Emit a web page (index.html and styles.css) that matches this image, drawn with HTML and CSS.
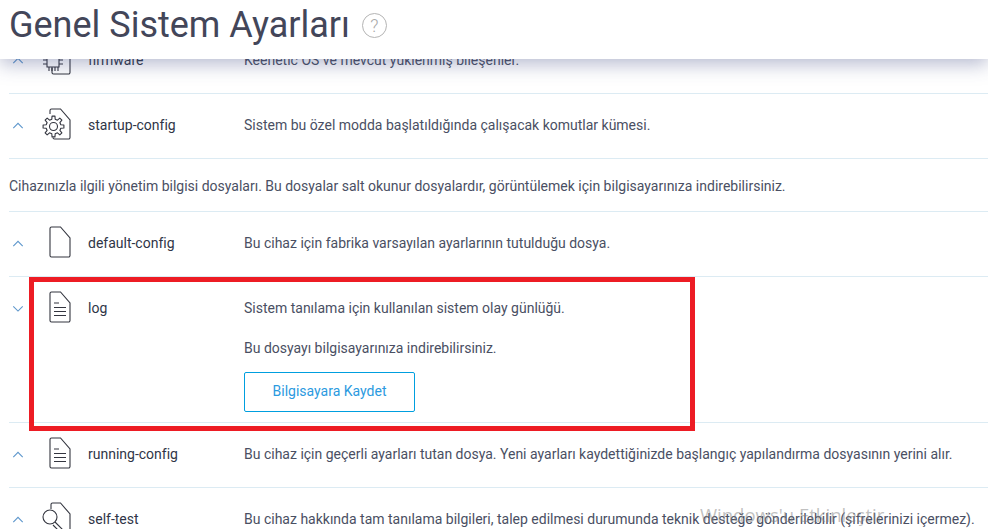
FILE: index.html
```html
<!DOCTYPE html>
<html lang="tr">
<head>
  <meta charset="UTF-8" />
  <title>Genel Sistem Ayarları</title>
  <link rel="stylesheet" href="styles.css">
</head>
<body>

<div class="page">
  <div class="page-header">
    <h1 class="page-title">Genel Sistem Ayarları</h1>
    <span class="help-badge">?</span>
  </div>

  <div class="file-list">
    <div class="file-row">
      <svg class="chevron" viewBox="0 0 14 8"><path d="M1.500 7 7 1.500 12.500 7"/></svg>
      <svg class="file-icon" viewBox="0 0 30 34">
        <path d="M7 26V30.500A1.500 1.500 0 0 0 8.500 32h15a1.500 1.500 0 0 0 1.500-1.500V13L15.500 2H6.500A1.500 1.500 0 0 0 5 3.500V8"/>
        <path d="M2 6h12v19H2zM-2 14h4M-2 18h4M-2 22h4M14 14h4M14 18h4M14 22h4M4 25v4M7 25v4M10 25v4M13 25v4"/>
      </svg>
      <div class="file-name">firmware</div>
      <div class="file-desc">Keenetic OS ve mevcut yüklenmiş bileşenler.</div>
    </div>

    <div class="file-row">
      <svg class="chevron" viewBox="0 0 14 8"><path d="M1.500 7 7 1.500 12.500 7"/></svg>
      <svg class="file-icon" viewBox="0 0 30 34">
        <path d="M5 7V3.500A1.500 1.500 0 0 1 6.500 2H15.500L25 13V30.500A1.500 1.500 0 0 1 23.500 32H9.500A1.500 1.500 0 0 1 8 30.500"/>
        <g transform="translate(8.500 19.500)">
          <path class="gear" d="M-1.690-7.310-1.460-10.400 1.460-10.400 1.690-7.310 3.970-6.360 6.320-8.390 8.390-6.320 6.360-3.970 7.310-1.690 10.400-1.460 10.400 1.460 7.310 1.690 6.360 3.970 8.390 6.320 6.320 8.390 3.970 6.360 1.690 7.310 1.460 10.400-1.460 10.400-1.690 7.310-3.970 6.360-6.320 8.390-8.390 6.320-6.360 3.970-7.310 1.690-10.400 1.460-10.400-1.460-7.310-1.690-6.360-3.970-8.390-6.320-6.320-8.390-3.970-6.360z"/>
          <circle r="4"/>
        </g>
      </svg>
      <div class="file-name">startup-config</div>
      <div class="file-desc">Sistem bu özel modda başlatıldığında çalışacak komutlar kümesi.</div>
    </div>

    <p class="list-note">Cihazınızla ilgili yönetim bilgisi dosyaları. Bu dosyalar salt okunur dosyalardır, görüntülemek için bilgisayarınıza indirebilirsiniz.</p>

    <div class="file-row">
      <svg class="chevron" viewBox="0 0 14 8"><path d="M1.500 7 7 1.500 12.500 7"/></svg>
      <svg class="file-icon" viewBox="0 0 30 34">
        <path d="M5 3.500A1.500 1.500 0 0 1 6.500 2H15.500L25 13V30.500A1.500 1.500 0 0 1 23.500 32h-17A1.500 1.500 0 0 1 5 30.500z"/>
      </svg>
      <div class="file-name">default-config</div>
      <div class="file-desc">Bu cihaz için fabrika varsayılan ayarlarının tutulduğu dosya.</div>
    </div>

    <div class="file-row is-open">
      <svg class="chevron" viewBox="0 0 14 8"><path d="M1.500 1.500 7 7l5.500-5.500"/></svg>
      <svg class="file-icon" viewBox="0 0 30 34">
        <path d="M5 3.500A1.500 1.500 0 0 1 6.500 2H15.500L25 13V30.500A1.500 1.500 0 0 1 23.500 32h-17A1.500 1.500 0 0 1 5 30.500z"/>
        <path d="M9 13h5M9 17.500h12M9 21.500h12M9 25.500h12"/>
      </svg>
      <div class="file-name">log</div>
      <div class="file-desc">
        Sistem tanılama için kullanılan sistem olay günlüğü.
        <p class="file-hint">Bu dosyayı bilgisayarınıza indirebilirsiniz.</p>
        <button class="save-button" type="button">Bilgisayara Kaydet</button>
      </div>
      <div class="highlight-box"></div>
    </div>

    <div class="file-row">
      <svg class="chevron" viewBox="0 0 14 8"><path d="M1.500 7 7 1.500 12.500 7"/></svg>
      <svg class="file-icon" viewBox="0 0 30 34">
        <path d="M5 3.500A1.500 1.500 0 0 1 6.500 2H15.500L25 13V30.500A1.500 1.500 0 0 1 23.500 32h-17A1.500 1.500 0 0 1 5 30.500z"/>
        <path d="M9 13h5M9 17.500h12M9 21.500h12M9 25.500h12"/>
      </svg>
      <div class="file-name">running-config</div>
      <div class="file-desc">Bu cihaz için geçerli ayarları tutan dosya. Yeni ayarları kaydettiğinizde başlangıç yapılandırma dosyasının yerini alır.</div>
    </div>

    <div class="file-row">
      <svg class="chevron" viewBox="0 0 14 8"><path d="M1.500 7 7 1.500 12.500 7"/></svg>
      <svg class="file-icon" viewBox="0 0 30 34">
        <path d="M6 8V3.500A1.500 1.500 0 0 1 7.500 2H15.500L25 13V30.500A1.500 1.500 0 0 1 23.500 32H20"/>
        <circle cx="5" cy="16" r="7"/>
        <path d="M10 21 19 30l-2.500 2.500L8 24"/>
      </svg>
      <div class="file-name">self-test</div>
      <div class="file-desc">Bu cihaz hakkında tam tanılama bilgileri, talep edilmesi durumunda teknik desteğe gönderilebilir (şifrelerinizi içermez).</div>
    </div>
  </div>

  <div class="watermark">Windows'u Etkinleştir</div>
</div>

</body>
</html>
```

FILE: styles.css
```css
html, body {
  margin: 0;
  height: 100%;
  overflow: hidden;
  background: #fff;
}

body {
  font-family: Roboto, sans-serif;
  font-size: 14px;
  color: #4a4f63;
}

.page {
  position: relative;
  height: 529px;
  overflow: hidden;
}

.page-header {
  position: absolute;
  top: 0;
  left: 0;
  right: 0;
  z-index: 2;
  height: 59px;
  display: flex;
  align-items: center;
  gap: 12px;
  padding: 0 0 9px 9px;
  box-sizing: border-box;
  background: #fff;
  box-shadow: 0 5px 18px rgba(60, 70, 130, 0.38);
}

.page-title {
  margin: 0;
  font-size: 36px;
  font-weight: 400;
  line-height: 50px;
  color: #434659;
}

.help-badge {
  width: 25px;
  height: 25px;
  box-sizing: border-box;
  border: 1px solid #b4b4b4;
  border-radius: 50%;
  font-size: 18px;
  font-weight: 300;
  line-height: 23px;
  text-align: center;
  color: #a8a8a8;
}

.file-list {
  margin: 29px 0 0 9px;
}

.file-row {
  position: relative;
  display: flex;
  align-items: flex-start;
  height: 64px;
  border-bottom: 1px solid #dcebf3;
}

.file-row.is-open {
  height: 145px;
}

.chevron {
  width: 12px;
  height: 7px;
  margin: 28px 0 0 3px;
  flex: none;
  fill: none;
  stroke: #5e97cc;
  stroke-width: 1.300;
}

.file-icon {
  width: 30px;
  height: 34px;
  margin: 13px 0 0 21px;
  flex: none;
  overflow: visible;
  fill: none;
  stroke: #33353f;
  stroke-width: 1.100;
}

.file-icon .gear {
  stroke-linejoin: round;
  fill: #fff;
}

.file-name {
  width: 156px;
  margin: 22px 0 0 13px;
  flex: none;
  line-height: 18px;
  color: #2f3547;
}

.file-desc {
  margin-top: 22px;
  line-height: 18px;
  white-space: nowrap;
}

.file-hint {
  margin: 22px 0 0;
}

.save-button {
  display: block;
  width: 171px;
  height: 40px;
  margin-top: 15px;
  padding: 0 0 2px;
  border: 1px solid #009fdf;
  border-radius: 2px;
  background: #fff;
  font-family: inherit;
  font-size: 14px;
  color: #2b9ae0;
}

.list-note {
  margin: 0;
  height: 52px;
  line-height: 54px;
  border-bottom: 1px solid #dcebf3;
  white-space: nowrap;
}

.highlight-box {
  position: absolute;
  top: 0;
  left: 20px;
  width: 666px;
  height: 154px;
  box-sizing: border-box;
  border: 5px solid #ed1c24;
}

.watermark {
  position: absolute;
  top: 502px;
  left: 700px;
  font-family: "Open Sans", sans-serif;
  font-size: 18.500px;
  color: rgba(130, 130, 130, 0.5);
  white-space: nowrap;
}
```
